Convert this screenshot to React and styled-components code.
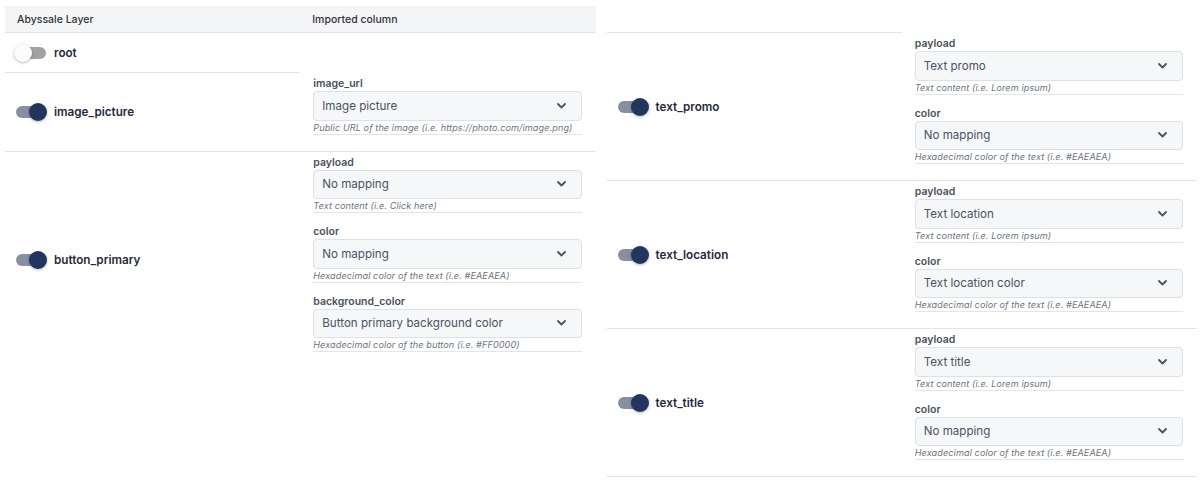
import styled, { createGlobalStyle } from "styled-components";

const GlobalStyle = createGlobalStyle`
  body {
    margin: 0;
    background: #ffffff;
    font-family: Inter, "Noto Sans", "Liberation Sans", sans-serif;
  }
`;

const Page = styled.div`
  display: flex;
  gap: 11px;
  padding: 6px 6px 0 5px;
`;

const Panel = styled.div`
  flex: 1;
  display: flex;
  flex-direction: column;
`;

const Row = styled.div`
  display: grid;
  grid-template-columns: 1fr 1fr;
  min-height: 40px;
`;

const HeaderRow = styled.div`
  display: grid;
  grid-template-columns: 1fr 1fr;
  background: ${(p) => (p.$blank ? "transparent" : "#f4f5f7")};
  height: 27px;
`;

const HeaderCell = styled.div`
  display: flex;
  align-items: center;
  padding-left: 12px;
  font-size: 10.5px;
  font-weight: 500;
  color: #2f3338;
  border-bottom: 1px solid ${(p) => (p.$line ? "#e3e5e9" : "transparent")};
`;

const LayerCell = styled.div`
  display: flex;
  align-items: center;
  gap: 8px;
  padding-left: 10px;
  border-bottom: 1px solid ${(p) => (p.$line ? "#e3e5e9" : "transparent")};
`;

const LayerName = styled.span`
  font-size: 11.7px;
  font-weight: 600;
  color: #1f2a40;
`;

const Toggle = styled.span`
  position: relative;
  flex-shrink: 0;
  width: 30px;
  height: 12px;
  margin-left: 1px;
  border-radius: 6px;
  background: ${(p) => (p.$on ? "#878fa2" : "#a2a2a2")};
`;

const Knob = styled.span`
  position: absolute;
  top: -3px;
  left: ${(p) => (p.$on ? "13px" : "-2px")};
  width: 18px;
  height: 18px;
  border-radius: 50%;
  background: ${(p) => (p.$on ? "#22355e" : "#fbfbfb")};
  box-shadow: 0 1px 3px rgba(0, 0, 0, 0.28);
`;

const MappingCell = styled.div`
  display: flex;
  flex-direction: column;
  padding: 4px 14px 4px 13px;
  border-bottom: 1px solid ${(p) => (p.$line ? "#e3e5e9" : "transparent")};
`;

const Field = styled.div`
  display: flex;
  flex-direction: column;
  margin-bottom: 12px;
`;

const FieldLabel = styled.label`
  font-size: 10.5px;
  font-weight: 600;
  line-height: 13px;
  margin-bottom: 1px;
  color: #4a515c;
`;

const Select = styled.div`
  box-sizing: border-box;
  height: 29.5px;
  display: flex;
  align-items: center;
  justify-content: space-between;
  padding: 0 15px 0 8px;
  background: #f6f7f9;
  border: 1px solid #dde1e7;
  border-radius: 4px;
  font-size: 11.6px;
  color: #4b5260;
`;

const Help = styled.div`
  font-size: 9.1px;
  font-style: italic;
  line-height: 13px;
  letter-spacing: 0.1px;
  white-space: nowrap;
  color: #6d737d;
  border-bottom: 1px solid #e3e5e9;
`;

const Chevron = () => (
  <svg width="9" height="6" viewBox="0 0 9 6" fill="none">
    <path d="M1 1l3.5 3.5L8 1" stroke="#4b5260" strokeWidth="1.8" strokeLinecap="round" strokeLinejoin="round" />
  </svg>
);

const HEX_TEXT = "Hexadecimal color of the text (i.e. #EAEAEA)";

const leftRows = [
  { name: "root", on: false, fields: [] },
  {
    name: "image_picture",
    on: true,
    fields: [
      { label: "image_url", value: "Image picture", help: "Public URL of the image (i.e. https://photo.com/image.png)" },
    ],
  },
  {
    name: "button_primary",
    on: true,
    last: true,
    fields: [
      { label: "payload", value: "No mapping", help: "Text content (i.e. Click here)" },
      { label: "color", value: "No mapping", help: HEX_TEXT },
      { label: "background_color", value: "Button primary background color", help: "Hexadecimal color of the button (i.e. #FF0000)" },
    ],
  },
];

const rightRows = [
  {
    name: "text_promo",
    on: true,
    fields: [
      { label: "payload", value: "Text promo", help: "Text content (i.e. Lorem ipsum)" },
      { label: "color", value: "No mapping", help: HEX_TEXT },
    ],
  },
  {
    name: "text_location",
    on: true,
    fields: [
      { label: "payload", value: "Text location", help: "Text content (i.e. Lorem ipsum)" },
      { label: "color", value: "Text location color", help: HEX_TEXT },
    ],
  },
  {
    name: "text_title",
    on: true,
    fields: [
      { label: "payload", value: "Text title", help: "Text content (i.e. Lorem ipsum)" },
      { label: "color", value: "No mapping", help: HEX_TEXT },
    ],
  },
];

const LayerRow = ({ row }) => {
  const line = !row.last;
  return (
    <Row>
      <LayerCell $line={line}>
        <Toggle $on={row.on}>
          <Knob $on={row.on} />
        </Toggle>
        <LayerName>{row.name}</LayerName>
      </LayerCell>
      <MappingCell $line={line && row.fields.length > 0}>
        {row.fields.map((f) => (
          <Field key={f.label}>
            <FieldLabel>{f.label}</FieldLabel>
            <Select>
              {f.value}
              <Chevron />
            </Select>
            <Help>{f.help}</Help>
          </Field>
        ))}
      </MappingCell>
    </Row>
  );
};

const App = () => (
  <>
    <GlobalStyle />
    <Page>
      <Panel>
        <HeaderRow>
          <HeaderCell $line>Abyssale Layer</HeaderCell>
          <HeaderCell $line>Imported column</HeaderCell>
        </HeaderRow>
        {leftRows.map((r) => (
          <LayerRow key={r.name} row={r} />
        ))}
      </Panel>
      <Panel>
        <HeaderRow $blank>
          <HeaderCell $line />
          <HeaderCell />
        </HeaderRow>
        {rightRows.map((r) => (
          <LayerRow key={r.name} row={r} />
        ))}
      </Panel>
    </Page>
  </>
);

export default App;
